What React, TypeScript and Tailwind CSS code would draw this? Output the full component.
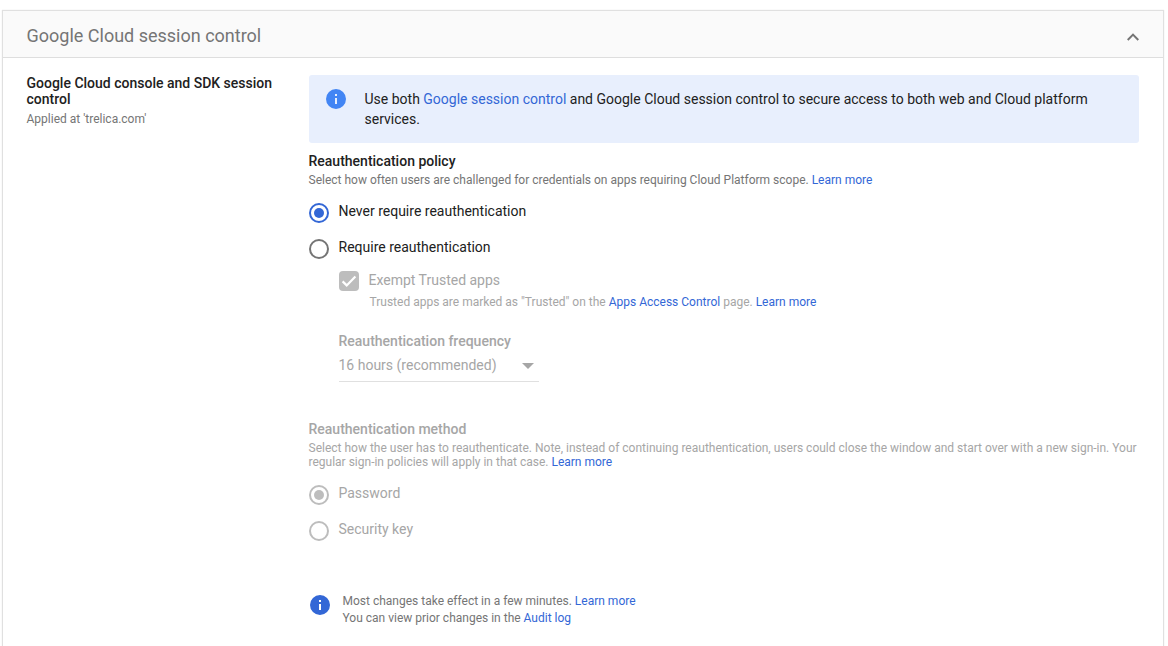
import { useState } from 'react';
import type { ReactNode } from 'react';

interface RadioOptionProps {
  label: string;
  checked: boolean;
  disabled?: boolean;
  onSelect?: () => void;
}

function Link({ children }: { children: ReactNode }) {
  return (
    <a href="#" className="text-[#3367d6]">
      {children}
    </a>
  );
}

function InfoIcon({ className }: { className: string }) {
  return (
    <svg className={className} viewBox="0 0 20 20" fill="currentColor">
      <path d="M10 0a10 10 0 1 0 0 20 10 10 0 0 0 0-20zm1 15H9V9h2v6zm0-8H9V5h2v2z" />
    </svg>
  );
}

function RadioOption({ label, checked, disabled = false, onSelect }: RadioOptionProps) {
  let ring = 'border-[#757575]';
  if (checked) ring = 'border-[#3367d6]';
  if (disabled) ring = 'border-[#bdbdbd]';

  return (
    <button type="button" role="radio" aria-checked={checked} disabled={disabled} onClick={onSelect} className="flex h-9 items-start text-left">
      <span className={`flex h-5 w-5 flex-shrink-0 items-center justify-center rounded-full border-2 ${ring}`}>
        {checked && <span className={`h-2.5 w-2.5 rounded-full ${disabled ? 'bg-[#bdbdbd]' : 'bg-[#3367d6]'}`} />}
      </span>
      <span className={`ml-2.5 text-sm leading-[17px] ${disabled ? 'text-[#a6a6a6]' : 'text-[#212121]'}`}>
        {label}
      </span>
    </button>
  );
}

export default function App() {
  const [policy, setPolicy] = useState('never');

  return (
    <div className="h-[646px] overflow-hidden bg-white pl-0.5 pt-2.5 font-['Roboto',sans-serif]">
      <section className="h-[660px] w-[1162px] border border-[#e0e0e0] bg-white shadow-[0_0_1px_rgba(0,0,0,0.12)]">
        {/* Header */}
        <header className="flex h-[47px] items-center justify-between border-b border-[#dedede] bg-[#fafafa] pl-[23.5px] pr-6">
          <h2 className="pt-[3px] text-lg leading-6 text-[#757575]">Google Cloud session control</h2>
          <svg className="mt-2 h-3 w-3" viewBox="0 0 12 12" fill="#757575">
            <path d="M6 1.3 0 7.3l1.41 1.4L6 4.12l4.59 4.58L12 7.3z" />
          </svg>
        </header>

        <div className="flex pl-[23.5px] pr-6">
          {/* Setting name */}
          <div className="w-[282px] flex-shrink-0 pt-[17px]">
            <h3 className="w-[255px] text-sm font-medium leading-4 text-[#212121]">
              Google Cloud console and SDK session control
            </h3>
            <p className="mt-1 text-xs leading-4 text-[#757575]">Applied at 'trelica.com'</p>
          </div>

          <div className="min-w-0 flex-1 pt-[17px]">
            <div className="flex h-[68px] rounded-[3px] bg-[#e8effd] pl-[17.5px] pt-3.5">
              <InfoIcon className="h-5 w-5 flex-shrink-0 text-[#4285f4]" />
              <p className="ml-[18.5px] w-[740px] text-sm leading-5 text-[#212121]">
                Use both <Link>Google session control</Link> and Google Cloud session control to secure access to both web and Cloud platform services.
              </p>
            </div>

            {/* Reauthentication policy */}
            <h3 className="mt-2.5 text-sm font-medium leading-4 text-[#212121]">Reauthentication policy</h3>
            <p className="mt-1 text-xs leading-3.5 text-[#757575]">
              Select how often users are challenged for credentials on apps requiring Cloud Platform scope. <Link>Learn more</Link>
            </p>
            <div role="radiogroup" className="mt-4 flex flex-col items-start">
              <RadioOption label="Never require reauthentication" checked={policy === 'never'} onSelect={() => setPolicy('never')} />
              <RadioOption label="Require reauthentication" checked={policy === 'require'} onSelect={() => setPolicy('require')} />
            </div>

            <div className="-mt-1 ml-[30px] text-[#a6a6a6]">
              <div className="flex items-start">
                <span className="flex h-5 w-5 items-center justify-center rounded-sm bg-[#bdbdbd]">
                  <svg className="h-4 w-4" viewBox="0 0 16 16" fill="none" stroke="white" strokeWidth={2.2}>
                    <path d="M1.6 8.4 5.7 12.4 14.4 3.6" />
                  </svg>
                </span>
                <span className="ml-2.5 text-sm leading-[18px]">Exempt Trusted apps</span>
              </div>
              <p className="ml-[31px] mt-1 text-xs leading-3.5">
                Trusted apps are marked as "Trusted" on the <Link>Apps Access Control</Link> page. <Link>Learn more</Link>
              </p>

              <h3 className="mt-6 text-sm font-medium leading-4">Reauthentication frequency</h3>
              <div className="mt-2 flex h-[25px] w-[200px] justify-between border-b border-[#e0e0e0] pr-[5px]">
                <span className="text-sm leading-4">16 hours (recommended)</span>
                <svg className="mt-1.5 h-1.5 w-3" viewBox="0 0 12 6" fill="#a6a6a6">
                  <path d="M0 0h12L6 6z" />
                </svg>
              </div>
            </div>

            {/* Reauthentication method */}
            <h3 className="mt-[39px] text-sm font-medium leading-4 text-[#a6a6a6]">Reauthentication method</h3>
            <p className="mt-1 text-xs leading-3.5 text-[#a6a6a6]">
              Select how the user has to reauthenticate. Note, instead of continuing reauthentication, users could close the window and start over with a new sign-in. Your regular sign-in policies will apply in that case. <Link>Learn more</Link>
            </p>
            <div role="radiogroup" className="mt-4 flex flex-col items-start">
              <RadioOption label="Password" checked disabled />
              <RadioOption label="Security key" checked={false} disabled />
            </div>

            <div className="mt-9 flex pl-[1.5px]">
              <InfoIcon className="mt-0.5 h-5 w-5 flex-shrink-0 text-[#3367d6]" />
              <p className="ml-[12.5px] text-xs leading-[17px] text-[#757575]">
                Most changes take effect in a few minutes. <Link>Learn more</Link>
                <br />
                You can view prior changes in the <Link>Audit log</Link>
              </p>
            </div>
          </div>
        </div>
      </section>
    </div>
  );
}
